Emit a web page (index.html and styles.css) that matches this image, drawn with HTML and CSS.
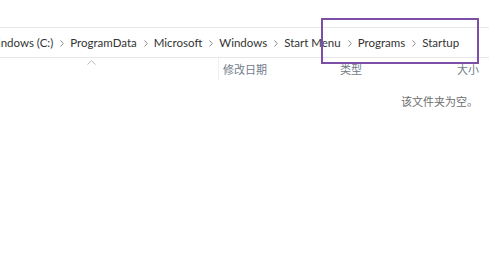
FILE: index.html
```html
<!DOCTYPE html>
<html lang="zh-CN">
<head>
<meta charset="utf-8">
<link rel="stylesheet" href="styles.css">
</head>
<body>
<div class="window">
  <div class="top-space"></div>
  <div class="address">
    <div class="crumbs">
      <span class="crumb">Windows (C:)</span><svg class="sep" width="4" height="7" viewBox="0 0 4 7"><path d="M0.5 0.5 L3.3 3.5 L0.5 6.5" fill="none" stroke="#8c8c8c" stroke-width="1"/></svg>
      <span class="crumb">ProgramData</span><svg class="sep" width="4" height="7" viewBox="0 0 4 7"><path d="M0.5 0.5 L3.3 3.5 L0.5 6.5" fill="none" stroke="#8c8c8c" stroke-width="1"/></svg>
      <span class="crumb">Microsoft</span><svg class="sep" width="4" height="7" viewBox="0 0 4 7"><path d="M0.5 0.5 L3.3 3.5 L0.5 6.5" fill="none" stroke="#8c8c8c" stroke-width="1"/></svg>
      <span class="crumb">Windows</span><svg class="sep" width="4" height="7" viewBox="0 0 4 7"><path d="M0.5 0.5 L3.3 3.5 L0.5 6.5" fill="none" stroke="#8c8c8c" stroke-width="1"/></svg>
      <span class="crumb">Start Menu</span><svg class="sep" width="4" height="7" viewBox="0 0 4 7"><path d="M0.5 0.5 L3.3 3.5 L0.5 6.5" fill="none" stroke="#8c8c8c" stroke-width="1"/></svg>
      <span class="crumb">Programs</span><svg class="sep" width="4" height="7" viewBox="0 0 4 7"><path d="M0.5 0.5 L3.3 3.5 L0.5 6.5" fill="none" stroke="#8c8c8c" stroke-width="1"/></svg>
      <span class="crumb">Startup</span>
    </div>
  </div>
  <div class="header">
    <div class="col col-name"><svg class="sort" width="9" height="5" viewBox="0 0 9 5"><path d="M0.5 4.5 L4.5 0.8 L8.5 4.5" fill="none" stroke="#b8bcc2" stroke-width="1"/></svg></div>
    <div class="col col-date">修改日期</div>
    <div class="col col-type">类型</div>
    <div class="col col-size">大小</div>
  </div>
  <div class="empty">该文件夹为空。</div>
  <div class="highlight"></div>
</div>
</body>
</html>
```

FILE: styles.css
```css
html, body {
  margin: 0;
  padding: 0;
  background: #ffffff;
}
.window {
  position: relative;
  width: 489px;
  height: 270px;
  overflow: hidden;
  font-family: "Lato", "Noto Sans CJK SC", sans-serif;
}
.top-space {
  height: 27px;
}
.address {
  height: 29px;
  border-top: 1px solid #e6e6e6;
  border-bottom: 1px solid #e6e6e6;
  display: flex;
  align-items: center;
  overflow: hidden;
}
.crumbs {
  display: flex;
  align-items: center;
  margin-left: -14px;
  white-space: nowrap;
  font-size: 11.5px;
  color: #333333;
}
.sep {
  flex: none;
  margin: 1px 6px 0 7px;
}
.header {
  display: grid;
  grid-template-columns: 218px 118px 118px 35px;
  height: 22px;
  font-family: "Noto Sans CJK SC", sans-serif;
  font-size: 11px;
  color: #707b88;
}
.col {
  display: flex;
  align-items: center;
  padding-left: 4px;
}
.col-name {
  align-items: flex-start;
  padding-left: 87px;
  padding-top: 2px;
}
.col-date {
  border-left: 1px solid #f0f0f0;
}
.col-size {
  padding-left: 3px;
}
.empty {
  margin-top: 13px;
  padding-left: 401px;
  font-family: "Noto Sans CJK SC", sans-serif;
  font-size: 11px;
  color: #6d6d6d;
}
.highlight {
  position: absolute;
  left: 321px;
  top: 18px;
  width: 154px;
  height: 42px;
  border: 2px solid #7c4ea6;
}
```
